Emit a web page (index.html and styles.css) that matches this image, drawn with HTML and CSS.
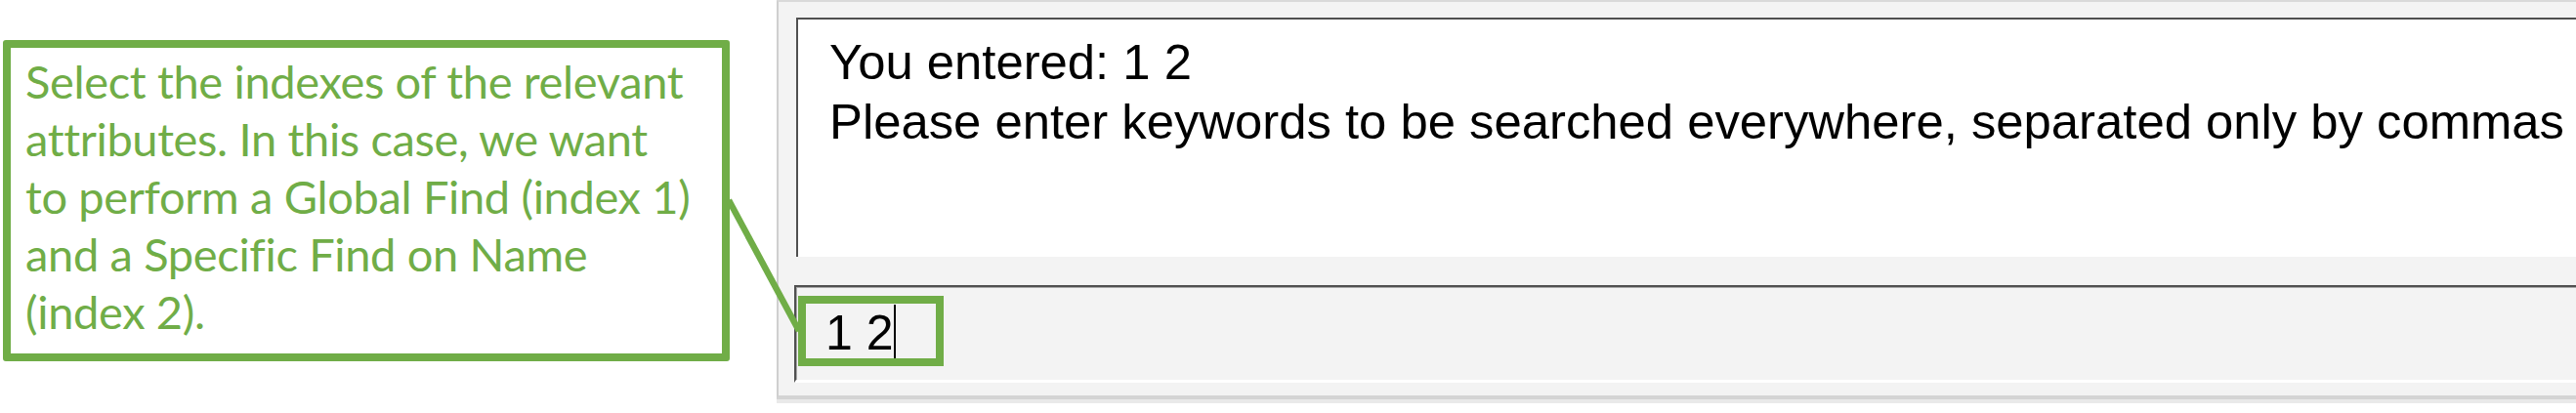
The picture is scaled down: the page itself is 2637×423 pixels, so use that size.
FILE: index.html
```html
<!DOCTYPE html>
<html lang="en">
<head>
<meta charset="utf-8">
<title>Keyword search prompt</title>
<link rel="stylesheet" href="styles.css">
</head>
<body>
<div class="page">
  <aside class="note-col">
    <div class="note">
      <p class="note-text">Select the indexes of the relevant<br>attributes. In this case, we want<br>to perform a Global Find (index 1)<br>and a Specific Find on Name<br>(index 2).</p>
    </div>
  </aside>
  <section class="window">
    <div class="output">
      <p class="line">You entered: 1 2</p>
      <p class="line">Please enter keywords to be searched everywhere, separated only by commas</p>
    </div>
    <div class="input">
      <span class="input-text">1 2</span><span class="caret"></span>
      <div class="highlight"></div>
    </div>
  </section>
  <svg class="connector" width="2637" height="423" viewBox="0 0 2637 423" aria-hidden="true">
    <line x1="746" y1="205" x2="818" y2="339"/>
  </svg>
</div>
</body>
</html>
```

FILE: styles.css
```css
html, body {
  margin: 0;
  padding: 0;
  background: #ffffff;
}

.page {
  position: relative;
  display: flex;
  width: 2637px;
  height: 423px;
  overflow: hidden;
  background: #ffffff;
}

.note-col {
  flex: 0 0 795px;
  box-sizing: border-box;
  padding: 41px 0 0 3px;
}

.note {
  width: 744px;
  height: 329px;
  box-sizing: border-box;
  border: 8px solid #70ad47;
  border-radius: 3px;
  padding: 5px 0 0 15px;
}

.note-text {
  margin: 0;
  font-family: Lato, "Open Sans", sans-serif;
  font-size: 47px;
  letter-spacing: -0.35px;
  line-height: 59px;
  color: #70ad47;
  white-space: nowrap;
}

.window {
  flex: 1 1 auto;
  display: flex;
  flex-direction: column;
  box-sizing: border-box;
  height: 409px;
  border-top: 2px solid #d9d9d9;
  border-left: 2px solid #cfcfcf;
  border-bottom: 4px solid #d4d4d4;
  box-shadow: 0 4px 0 #e9e9e9;
  padding: 16px 0 0 18px;
  background: #f3f3f3;
  overflow: hidden;
}

.output {
  flex: 0 0 auto;
  height: 245px;
  box-sizing: border-box;
  border-top: 2px solid #505050;
  border-left: 2px solid #505050;
  background: #ffffff;
  padding: 13px 0 0 32px;
  font-family: "Liberation Sans", Arial, sans-serif;
  font-size: 50.8px;
  line-height: 61px;
  color: #000000;
  white-space: nowrap;
}

.line {
  margin: 0;
}

.input {
  position: relative;
  flex: 0 0 auto;
  margin: 29px 0 0 -2px;
  height: 100px;
  box-sizing: border-box;
  border-top: 2px solid #505050;
  border-left: 2px solid #505050;
  border-bottom: 3px solid #ffffff;
  box-shadow: inset 1px 1px 0 #a8a8a8;
  padding: 17px 0 0 30px;
  font-family: "Liberation Sans", Arial, sans-serif;
  font-size: 50px;
  line-height: 60px;
  color: #000000;
  white-space: nowrap;
}

.caret {
  display: inline-block;
  width: 0;
  height: 55px;
  border-left: 2px solid #000000;
  margin-left: 0;
  vertical-align: -9px;
}

.highlight {
  position: absolute;
  left: 2px;
  top: 9px;
  width: 149px;
  height: 72px;
  box-sizing: border-box;
  border: 8px solid #70ad47;
}

.connector {
  position: absolute;
  left: 0;
  top: 0;
  pointer-events: none;
}

.connector line {
  stroke: #70ad47;
  stroke-width: 6.5;
}
```
